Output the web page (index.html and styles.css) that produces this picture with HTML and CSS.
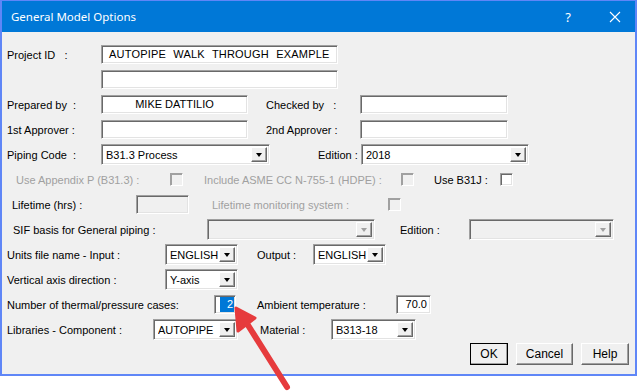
FILE: index.html
```html
<!DOCTYPE html>
<html lang="en">
  <head>
    <meta charset="utf-8" />
    <meta name="viewport" content="width=device-width, initial-scale=1.0" />
    <title>General Model Options</title>
    <link rel="stylesheet" href="styles.css">
  </head>

  <body>
    <div class="window">
      <header class="titlebar">
        <span class="title">General Model Options</span>
        <span class="help">?</span>
        <svg class="close" width="12" height="12" viewBox="0 0 12 12">
          <path d="M1 1 L11 11 M11 1 L1 11" stroke="#fff" stroke-width="1.1" fill="none" />
        </svg>
      </header>

      <form class="dialog">
        <div class="row">
          <label class="w-94">Project ID&nbsp;&nbsp;&nbsp;:</label>
          <span class="field w-237 spaced">AUTOPIPE WALK THROUGH EXAMPLE</span>
        </div>
        <div class="row">
          <span class="field w-237 ml-94"></span>
        </div>
        <div class="row">
          <label class="w-94">Prepared by&nbsp;&nbsp;:</label>
          <span class="field w-147 center">MIKE DATTILIO</span>
          <label class="w-94 ml-18">Checked by&nbsp;&nbsp;&nbsp;:</label>
          <span class="field w-148"></span>
        </div>
        <div class="row">
          <label class="w-94">1st Approver :</label>
          <span class="field w-147"></span>
          <label class="w-94 ml-18">2nd Approver :</label>
          <span class="field w-148"></span>
        </div>
        <div class="row">
          <label class="w-94">Piping Code&nbsp;&nbsp;:</label>
          <span class="combo w-169"><span class="val">B31.3 Process</span><span class="drop"></span></span>
          <label class="w-43 ml-48">Edition :</label>
          <span class="combo w-168"><span class="val">2018</span><span class="drop"></span></span>
        </div>
        <div class="row">
          <label class="w-154 ml-9 off">Use Appendix P (B31.3) :</label>
          <span class="check disabled"></span>
          <label class="w-197 ml-21 off">Include ASME CC N-755-1 (HDPE) :</label>
          <span class="check disabled"></span>
          <label class="w-66 ml-20">Use B31J :</label>
          <span class="check"></span>
        </div>
        <div class="row">
          <label class="w-124 ml-5">Lifetime (hrs) :</label>
          <span class="field w-53 disabled"></span>
          <label class="w-176 ml-23 off">Lifetime monitoring system :</label>
          <span class="check disabled"></span>
        </div>
        <div class="row">
          <label class="w-194 ml-6">SIF basis for General piping :</label>
          <span class="combo w-168 disabled"><span class="val"></span><span class="drop"></span></span>
          <label class="w-69 ml-25">Edition :</label>
          <span class="combo w-145 disabled"><span class="val"></span><span class="drop"></span></span>
        </div>
        <div class="row">
          <label class="w-158">Units file name - Input :</label>
          <span class="combo w-73"><span class="val">ENGLISH</span><span class="drop"></span></span>
          <label class="w-56 ml-19">Output :</label>
          <span class="combo w-73"><span class="val">ENGLISH</span><span class="drop"></span></span>
        </div>
        <div class="row">
          <label class="w-158">Vertical axis direction :</label>
          <span class="combo w-73"><span class="val">Y-axis</span><span class="drop"></span></span>
        </div>
        <div class="row">
          <label class="w-207">Number of thermal/pressure cases:</label>
          <span class="field w-22 right"><span class="selected">2</span></span>
          <label class="w-139 ml-21">Ambient temperature :</label>
          <span class="field w-35 right">70.0</span>
        </div>
        <div class="row">
          <label class="w-146">Libraries - Component :</label>
          <span class="combo w-85"><span class="val">AUTOPIPE</span><span class="drop"></span></span>
          <label class="w-71 ml-22">Material :</label>
          <span class="combo w-85"><span class="val">B313-18</span><span class="drop"></span></span>
        </div>
        <div class="buttons">
          <button type="button" class="btn default w-38">OK</button>
          <button type="button" class="btn w-57">Cancel</button>
          <button type="button" class="btn w-48">Help</button>
        </div>
      </form>
    </div>

    <!-- callout arrow drawn over the dialog -->
    <svg class="arrow" width="639" height="392" viewBox="0 0 639 392">
      <line x1="287" y1="387" x2="246" y2="322" stroke="#e63b3d" stroke-width="6" stroke-linecap="round" />
      <polygon points="236,308 238,331 255,318" fill="#e63b3d" stroke="#e63b3d" stroke-width="3" stroke-linejoin="round" />
    </svg>
  </body>
</html>
```

FILE: styles.css
```css
body {
  margin: 0;
  background: #fff;
  font-family: "Liberation Sans", Arial, sans-serif;
  font-size: 11px;
  position: relative;
  width: 639px;
  height: 392px;
  overflow: hidden;
}

.window {
  width: 637px;
  box-sizing: border-box;
  border: 2px solid #5f86f7;
  border-top: 1px solid #5f86f7;
  background: #f0f0f0;
}

.titlebar {
  height: 31px;
  background: #0078d7;
  color: #fff;
  display: flex;
  align-items: center;
  padding-left: 9px;
  font-family: "Noto Sans", "Open Sans", sans-serif;
  font-size: 11.5px;
}

.title {
  flex: 1;
}

.help {
  font-size: 13px;
  margin-right: 38px;
}

.close {
  margin-right: 14px;
}

.dialog {
  padding: 10px 0 9px 5px;
}

.row {
  display: flex;
  align-items: center;
  height: 25px;
}

label {
  color: #000;
  white-space: nowrap;
  flex: none;
}

label.off {
  color: #a0a0a0;
}

.field,
.combo {
  box-sizing: border-box;
  flex: none;
  height: 19px;
  line-height: 17px;
  background: #fff;
  border: 1px solid;
  border-color: #a0a0a0 #fff #fff #a0a0a0;
  box-shadow: inset 1px 1px #696969, inset -1px -1px #e3e3e3;
  padding: 0 5px;
  white-space: nowrap;
  overflow: hidden;
}

.field.disabled {
  background: #f0f0f0;
}

.spaced {
  word-spacing: 4px;
  padding-left: 7px;
  letter-spacing: 0.2px;
}

.center {
  text-align: center;
}

.right {
  text-align: right;
  padding-right: 3px;
}

.field.w-22 {
  padding: 1px 1px 1px 0;
  line-height: 15px;
}

.selected {
  display: inline-block;
  width: 13px;
  background: #0078d7;
  color: #fff;
  text-align: right;
  padding-right: 1px;
}

.combo {
  height: 21px;
  line-height: 19px;
  display: flex;
  padding: 2px 2px 2px 4px;
}

.combo .val {
  flex: 1;
  line-height: 15px;
  padding-top: 1px;
  overflow: hidden;
}

.combo.disabled {
  background: #f0f0f0;
}

.drop {
  flex: none;
  width: 16px;
  height: 15px;
  box-sizing: border-box;
  background: #f0f0f0;
  border: 1px solid;
  border-color: #fff #696969 #696969 #fff;
  box-shadow: inset -1px -1px #a0a0a0;
  position: relative;
}

.drop::after {
  content: "";
  position: absolute;
  left: 4px;
  top: 5px;
  border-left: 3.5px solid transparent;
  border-right: 3.5px solid transparent;
  border-top: 4px solid #000;
}

.combo.disabled .drop::after {
  border-top-color: #a0a0a0;
}

.check {
  flex: none;
  width: 13px;
  height: 13px;
  box-sizing: border-box;
  background: #fff;
  border: 1px solid;
  border-color: #a0a0a0 #fff #fff #a0a0a0;
  box-shadow: inset 1px 1px #696969, inset -1px -1px #e3e3e3;
}

.check.disabled {
  background: #f0f0f0;
  box-shadow: inset 1px 1px #a0a0a0;
}

.buttons {
  display: flex;
  justify-content: flex-end;
  gap: 8px;
  padding-right: 6px;
  margin-top: 1px;
}

.btn {
  height: 22px;
  box-sizing: border-box;
  background: #f0f0f0;
  font-family: "Liberation Sans", Arial, sans-serif;
  font-size: 12px;
  color: #000;
  border: 1px solid;
  border-color: #fff #696969 #696969 #fff;
  box-shadow: inset -1px -1px #a0a0a0;
  padding: 0;
}

.btn.default {
  outline: 1px solid #000;
  outline-offset: -1px;
}

.arrow {
  position: absolute;
  left: 0;
  top: 0;
  pointer-events: none;
}

/* widths and offsets taken from the dialog grid */
.w-22 { width: 22px; }
.w-35 { width: 35px; }
.w-38 { width: 38px; }
.w-43 { width: 43px; }
.w-48 { width: 48px; }
.w-53 { width: 53px; }
.w-56 { width: 56px; }
.w-57 { width: 57px; }
.w-66 { width: 66px; }
.w-69 { width: 69px; }
.w-71 { width: 71px; }
.w-73 { width: 73px; }
.w-85 { width: 85px; }
.w-94 { width: 94px; }
.w-124 { width: 124px; }
.w-139 { width: 139px; }
.w-145 { width: 145px; }
.w-146 { width: 146px; }
.w-147 { width: 147px; }
.w-148 { width: 148px; }
.w-154 { width: 154px; }
.w-158 { width: 158px; }
.w-168 { width: 168px; }
.w-169 { width: 169px; }
.w-176 { width: 176px; }
.w-194 { width: 194px; }
.w-197 { width: 197px; }
.w-207 { width: 207px; }
.w-237 { width: 237px; }

.ml-5 { margin-left: 5px; }
.ml-6 { margin-left: 6px; }
.ml-9 { margin-left: 9px; }
.ml-18 { margin-left: 18px; }
.ml-19 { margin-left: 19px; }
.ml-20 { margin-left: 20px; }
.ml-21 { margin-left: 21px; }
.ml-22 { margin-left: 22px; }
.ml-23 { margin-left: 23px; }
.ml-25 { margin-left: 25px; }
.ml-48 { margin-left: 48px; }
.ml-94 { margin-left: 94px; }
```
